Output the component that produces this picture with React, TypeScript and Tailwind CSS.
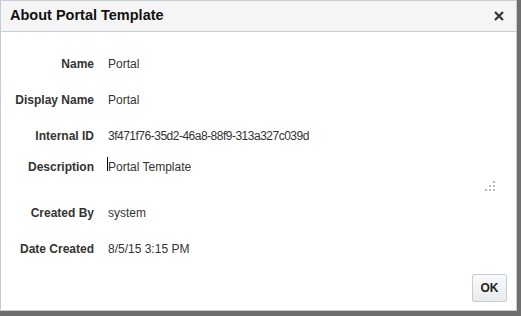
import React from "react"

const ROWS = [
  { label: "Name", value: "Portal" },
  { label: "Display Name", value: "Portal" },
  { label: "Internal ID", value: "3f471f76-35d2-46a8-88f9-313a327c039d", tight: true },
]

function Row({ label, tight, children }: { label: string; tight?: boolean; children: React.ReactNode }) {
  return (
    <div className="flex h-9 items-center">
      <div className="w-[93px] shrink-0 text-right font-bold text-[#333]">{label}</div>
      <div className={`ml-[14px] text-[#333] ${tight ? "tracking-[-0.5px]" : ""}`}>{children}</div>
    </div>
  )
}

function Grip() {
  return (
    <svg width="12" height="10" viewBox="0 0 12 10" className="absolute right-[20px] bottom-[4px]">
      {[
        [9, 0],
        [5, 4],
        [9, 4],
        [1, 8],
        [5, 8],
        [9, 8],
      ].map(([x, y]) => (
        <rect key={`${x}-${y}`} x={x} y={y} width="2" height="2" fill="#b9b9b9" />
      ))}
    </svg>
  )
}

export default function App() {
  return (
    <div className="h-[316px] w-[521px] bg-[#6e6e6e] font-['Liberation_Sans',Arial,sans-serif] text-[12px]">
      <div className="flex h-[311px] w-[517px] flex-col border border-[#c4ced7] bg-white">
        {/* Header */}
        <div className="flex h-[31px] shrink-0 items-center justify-between border-b border-[#c4ced7] bg-[#f5f5f5] pl-[9px] pr-[12px]">
          <span className="text-[14.5px] font-bold text-[#111]">About Portal Template</span>
          <svg width="10" height="10" viewBox="0 0 10 10">
            <path d="M1 1 L9 9 M9 1 L1 9" stroke="#333" strokeWidth="2.2" />
          </svg>
        </div>

        {/* Body */}
        <div className="flex-1 pt-[14px]">
          {ROWS.map((r) => (
            <Row key={r.label} label={r.label} tight={r.tight}>
              {r.value}
            </Row>
          ))}

          <div className="relative flex h-[41px]">
            <div className="w-[93px] shrink-0 pt-[4px] text-right font-bold text-[#333]">Description</div>
            <div className="ml-[13px] flex items-start pt-[4px] text-[#333]">
              <span className="mt-[-1px] h-[14px] w-px bg-black" />
              Portal Template
            </div>
            <Grip />
          </div>

          <Row label="Created By">system</Row>
          <Row label="Date Created">8/5/15 3:15 PM</Row>
        </div>

        {/* Footer */}
        <div className="flex justify-end pb-[8px] pr-[9px]">
          <button className="h-[28px] w-[35px] rounded-[2px] border border-[#c4ced7] bg-gradient-to-b from-[#f8f9fa] to-[#e8ecef] text-[12px] font-bold text-[#222]">
            OK
          </button>
        </div>
      </div>
    </div>
  )
}
